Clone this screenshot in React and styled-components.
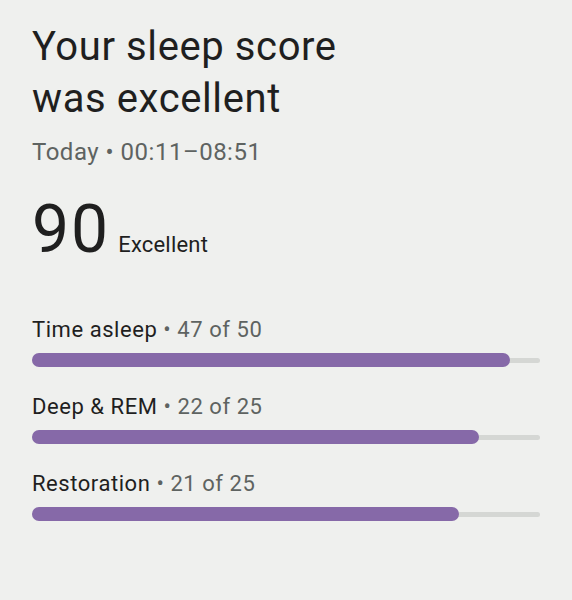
import React from 'react'
import styled, { createGlobalStyle } from 'styled-components'

const GlobalStyle = createGlobalStyle`
  html, body {
    margin: 0;
    padding: 0;
    background: #eff0ee;
  }
  body {
    font-family: Roboto, "Noto Sans", sans-serif;
  }
`

const Page = styled.main`
  min-height: 100vh;
  box-sizing: border-box;
  padding: 21px 32px 0 32px;
  background: #eff0ee;
`

const Title = styled.h1`
  margin: 0;
  font-size: 40px;
  line-height: 52px;
  font-weight: 400;
  letter-spacing: 0.6px;
  color: #1f1f1f;
`

const Subtitle = styled.div`
  margin-top: 12px;
  font-size: 24px;
  line-height: 30px;
  letter-spacing: 0.5px;
  color: #5e6361;
`

const ScoreRow = styled.div`
  display: flex;
  align-items: baseline;
  gap: 8px;
  margin-top: 25px;
`

const Score = styled.span`
  font-size: 66px;
  line-height: 76px;
  letter-spacing: 2px;
  color: #1f1f1f;
`

const ScoreLabel = styled.span`
  font-size: 22px;
  letter-spacing: 0.2px;
  color: #1f1f1f;
`

const Metrics = styled.section`
  display: flex;
  flex-direction: column;
  gap: 26.5px;
  margin-top: 48.5px;
`

const Metric = styled.div`
  display: flex;
  flex-direction: column;
  gap: 10.5px;
`

const MetricLabel = styled.div`
  font-size: 22px;
  line-height: 26px;
  letter-spacing: 0.55px;
  color: #1f1f1f;
`

const MetricValue = styled.span`
  color: #5e6361;
`

const Track = styled.div`
  position: relative;
  height: 14px;
  width: 508px;
  display: flex;
  align-items: center;
  &::before {
    content: '';
    position: absolute;
    left: 0;
    right: 0;
    height: 5px;
    border-radius: 3px;
    background: #d5d7d4;
  }
`

const Fill = styled.div`
  position: relative;
  height: 14px;
  border-radius: 7px;
  background: #8669a8;
`

const metrics = [
  { name: 'Time asleep', value: 47, max: 50 },
  { name: 'Deep & REM', value: 22, max: 25 },
  { name: 'Restoration', value: 21, max: 25 },
]

export default function App() {
  return (
    <>
      <GlobalStyle />
      <Page>
        <Title>
          Your sleep score
          <br />
          was excellent
        </Title>
        <Subtitle>Today • 00:11–08:51</Subtitle>
        <ScoreRow>
          <Score>90</Score>
          <ScoreLabel>Excellent</ScoreLabel>
        </ScoreRow>
        <Metrics>
          {metrics.map((m) => (
            <Metric key={m.name}>
              <MetricLabel>
                {m.name} <MetricValue>• {m.value} of {m.max}</MetricValue>
              </MetricLabel>
              <Track>
                <Fill style={{ width: `${(m.value / m.max) * 100}%` }} />
              </Track>
            </Metric>
          ))}
        </Metrics>
      </Page>
    </>
  )
}
